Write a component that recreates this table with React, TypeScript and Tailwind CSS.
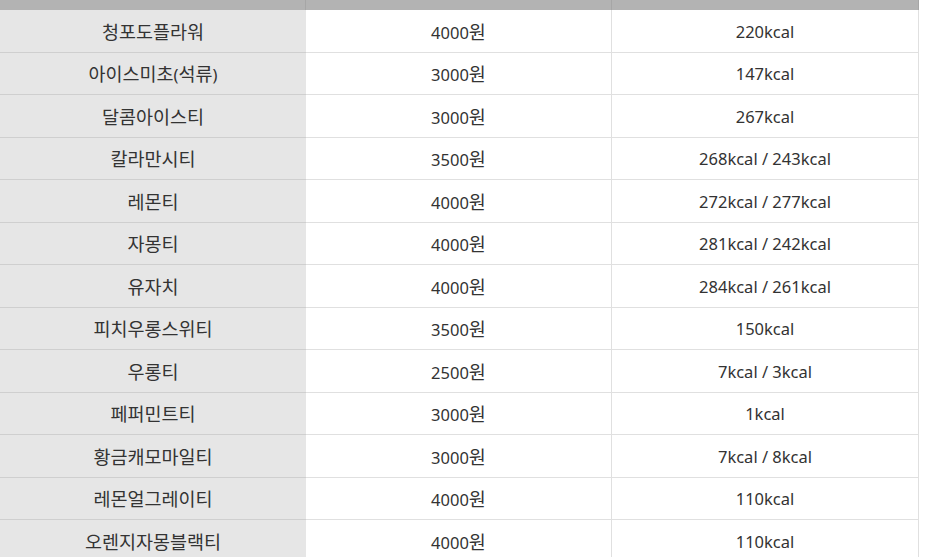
import React from 'react';

const rows: [string, string, string][] = [
  ['청포도플라워', '4000원', '220kcal'],
  ['아이스미초(석류)', '3000원', '147kcal'],
  ['달콤아이스티', '3000원', '267kcal'],
  ['칼라만시티', '3500원', '268kcal / 243kcal'],
  ['레몬티', '4000원', '272kcal / 277kcal'],
  ['자몽티', '4000원', '281kcal / 242kcal'],
  ['유자치', '4000원', '284kcal / 261kcal'],
  ['피치우롱스위티', '3500원', '150kcal'],
  ['우롱티', '2500원', '7kcal / 3kcal'],
  ['페퍼민트티', '3000원', '1kcal'],
  ['황금캐모마일티', '3000원', '7kcal / 8kcal'],
  ['레몬얼그레이티', '4000원', '110kcal'],
  ['오렌지자몽블랙티', '4000원', '110kcal'],
];

// hangul glyphs in the shot are drawn larger than the latin ones
function Txt({ s }: { s: string }) {
  const parts = s.split(/([\uac00-\ud7a3]+)/).filter(Boolean);
  return (
    <span className="leading-none">
      {parts.map((p, i) =>
        /[\uac00-\ud7a3]/.test(p) ? (
          <span key={i} className="text-[18.5px]">{p}</span>
        ) : (
          <span key={i}>{p}</span>
        )
      )}
    </span>
  );
}

export default function App() {
  return (
    <div className="w-[943px] h-[557px] overflow-hidden bg-white text-[16.5px] text-[#333] font-['Noto_Sans','Noto_Sans_CJK_KR',sans-serif]">
      <div className="w-[919px]">
        {/* header, scrolled almost out of view */}
        <div className="flex h-[10px] bg-[#b3b3b3]">
          <div className="w-[306px] border-r border-[#a6a6a6]" />
          <div className="w-[306px] border-r border-[#a6a6a6]" />
          <div className="flex-1 border-r border-[#a6a6a6]" />
        </div>
        {rows.map(([name, price, kcal]) => (
          <div key={name} className="flex h-[42.5px]">
            <div className="w-[306px] flex items-center justify-center pt-[2px] bg-[#e6e6e6] border-b border-[#cfcfcf]">
              <Txt s={name} />
            </div>
            <div className="w-[306px] flex items-center justify-center pt-[2px] border-b border-r border-[#e0e0e0]">
              <Txt s={price} />
            </div>
            <div className="flex-1 flex items-center justify-center pt-[2px] border-b border-r border-[#e0e0e0]">
              <Txt s={kcal} />
            </div>
          </div>
        ))}
      </div>
    </div>
  );
}
